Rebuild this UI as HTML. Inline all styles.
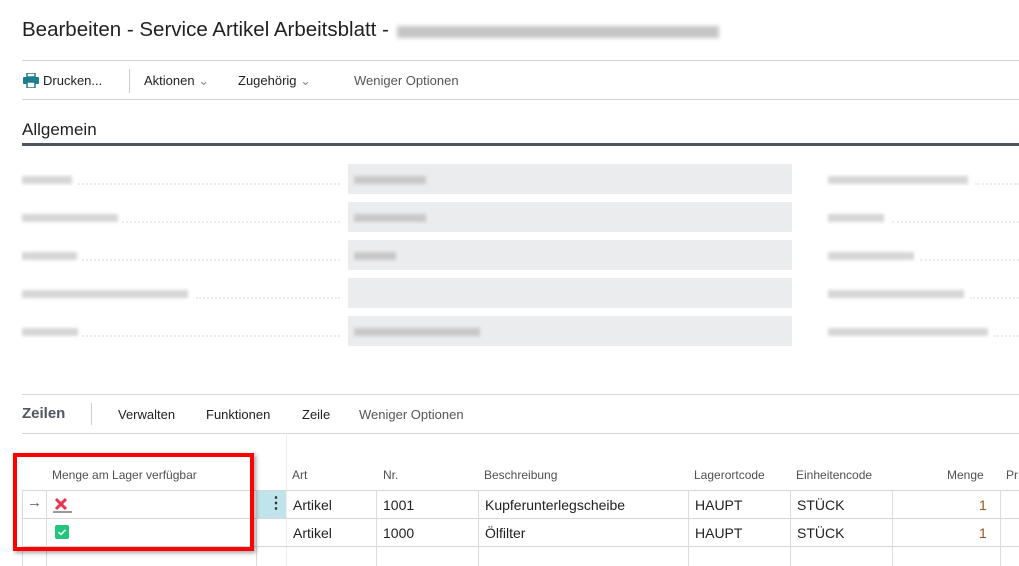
<!DOCTYPE html>
<html><head><meta charset="utf-8"><style>
body{margin:0;width:1019px;height:566px;overflow:hidden;background:#fff;font-family:"Liberation Sans",sans-serif;color:#212121;position:relative}
.a{position:absolute;white-space:nowrap}
.hl{position:absolute;height:1px;background:#d6d6d6}
.vl{position:absolute;width:1px;background:#dcdcdc}
.box{position:absolute;left:348px;width:444px;height:30px;background:#ebecee}
.lab{position:absolute;height:8px;background:#d6d6d6;filter:blur(1.5px)}
.dots{position:absolute;border-top:2px dotted #ececec;height:0}
.t13{font-size:13px}
.h{font-size:12px;color:#505050}
.c{font-size:14px;color:#212121}
</style></head><body>
<div class="a" style="left:22px;top:18px;font-size:20.5px;color:#212121">Bearbeiten - Service Artikel Arbeitsblatt -</div>
<div class="a" style="left:397px;top:26px;width:322px;height:12px;background:#c5c5c5;filter:blur(2px)"></div>
<div class="hl" style="left:22px;top:60px;width:997px"></div>
<svg class="a" style="left:23px;top:73px" width="16" height="15" viewBox="0 0 16 15"><rect x="4" y="0" width="8" height="4" fill="none" stroke="#1d7d90" stroke-width="1.5"/><rect x="0" y="4" width="16" height="7" rx="1" fill="#1d7d90"/><rect x="4" y="9" width="8" height="6" fill="#fff" stroke="#1d7d90" stroke-width="1.5"/></svg>
<div class="a t13" style="left:43px;top:73px">Drucken...</div>
<div class="vl" style="left:129px;top:69px;height:24px;background:#ccc"></div>
<div class="a t13" style="left:144px;top:73px">Aktionen <span style="color:#888">&#8964;</span></div>
<div class="a t13" style="left:238px;top:73px">Zugehörig <span style="color:#888">&#8964;</span></div>
<div class="a t13" style="left:354px;top:73px;color:#555">Weniger Optionen</div>
<div class="hl" style="left:22px;top:99px;width:997px"></div>
<div class="a" style="left:22px;top:120px;font-size:17px">Allgemein</div>
<div class="a" style="left:22px;top:143px;width:997px;height:3px;background:#4f5560"></div>

<div class="box" style="top:164px"></div><div class="box" style="top:202px"></div><div class="box" style="top:240px"></div><div class="box" style="top:278px"></div><div class="box" style="top:316px"></div>
<div class="lab" style="left:22px;top:176px;width:50px"></div><div class="dots" style="left:78px;top:183px;width:262px"></div>
<div class="lab" style="left:22px;top:214px;width:96px"></div><div class="dots" style="left:122px;top:221px;width:218px"></div>
<div class="lab" style="left:22px;top:252px;width:55px"></div><div class="dots" style="left:82px;top:259px;width:258px"></div>
<div class="lab" style="left:22px;top:290px;width:166px"></div><div class="dots" style="left:196px;top:297px;width:144px"></div>
<div class="lab" style="left:22px;top:328px;width:56px"></div><div class="dots" style="left:82px;top:335px;width:258px"></div>
<div class="lab" style="left:354px;top:176px;width:72px;background:#c8c8c8"></div>
<div class="lab" style="left:354px;top:214px;width:72px;background:#c8c8c8"></div>
<div class="lab" style="left:354px;top:252px;width:42px;background:#c8c8c8"></div>
<div class="lab" style="left:354px;top:328px;width:126px;background:#c8c8c8"></div>
<div class="lab" style="left:828px;top:176px;width:140px"></div><div class="dots" style="left:975px;top:183px;width:44px"></div>
<div class="lab" style="left:828px;top:214px;width:56px"></div><div class="dots" style="left:892px;top:221px;width:127px"></div>
<div class="lab" style="left:828px;top:252px;width:86px"></div><div class="dots" style="left:920px;top:259px;width:99px"></div>
<div class="lab" style="left:828px;top:290px;width:136px"></div><div class="dots" style="left:970px;top:297px;width:49px"></div>
<div class="lab" style="left:828px;top:328px;width:160px"></div><div class="dots" style="left:994px;top:335px;width:25px"></div>

<div class="hl" style="left:22px;top:394px;width:997px"></div>
<div class="a" style="left:22px;top:405px;font-size:15px;font-weight:bold;color:#505560">Zeilen</div>
<div class="vl" style="left:91px;top:403px;height:22px;background:#ccc"></div>
<div class="a t13" style="left:118px;top:407px">Verwalten</div>
<div class="a t13" style="left:206px;top:407px">Funktionen</div>
<div class="a t13" style="left:302px;top:407px">Zeile</div>
<div class="a t13" style="left:359px;top:407px;color:#555">Weniger Optionen</div>
<div class="hl" style="left:22px;top:433px;width:997px"></div>

<div class="vl" style="left:286px;top:433px;height:133px;background:#eee"></div>
<div class="hl" style="left:22px;top:490px;width:997px"></div>
<div class="hl" style="left:22px;top:518px;width:997px"></div>
<div class="hl" style="left:22px;top:546px;width:997px"></div>
<div class="vl" style="left:22px;top:490px;height:76px"></div>
<div class="vl" style="left:46px;top:490px;height:76px"></div>
<div class="vl" style="left:256px;top:490px;height:76px"></div>
<div class="vl" style="left:376px;top:490px;height:76px"></div>
<div class="vl" style="left:478px;top:490px;height:76px"></div>
<div class="vl" style="left:688px;top:490px;height:76px"></div>
<div class="vl" style="left:790px;top:490px;height:76px"></div>
<div class="vl" style="left:892px;top:490px;height:76px"></div>
<div class="vl" style="left:1000px;top:490px;height:76px"></div>
<div class="a" style="left:257px;top:491px;width:29px;height:27px;background:#c0e4ec"></div>
<div class="a" style="left:268px;top:493px;font-size:16px;color:#333;font-weight:bold">&#8942;</div>

<div class="a h" style="left:52px;top:468px">Menge am Lager verfügbar</div>
<div class="a h" style="left:292px;top:468px">Art</div>
<div class="a h" style="left:383px;top:468px">Nr.</div>
<div class="a h" style="left:484px;top:468px">Beschreibung</div>
<div class="a h" style="left:694px;top:468px">Lagerortcode</div>
<div class="a h" style="left:796px;top:468px">Einheitencode</div>
<div class="a h" style="left:947px;top:468px">Menge</div>
<div class="a h" style="left:1006px;top:468px">Pr</div>

<div class="a" style="left:27px;top:494px;font-size:15px;color:#505a70">&#8594;</div>
<svg class="a" style="left:53px;top:497px" width="20" height="16" viewBox="0 0 20 16"><path d="M3 2L13 12M13 2L3 12" stroke="#e8334e" stroke-width="3"/><line x1="0" y1="15" x2="19" y2="15" stroke="#333" stroke-width="1"/></svg>
<svg class="a" style="left:55px;top:525px" width="14" height="14" viewBox="0 0 14 14"><rect width="14" height="14" rx="2" fill="#1ec77a"/><path d="M3.5 7.2L6 9.5L10.5 4.8" stroke="#fff" stroke-width="1.5" fill="none"/></svg>

<div class="a c" style="left:293px;top:497px">Artikel</div>
<div class="a c" style="left:383px;top:497px">1001</div>
<div class="a c" style="left:485px;top:497px">Kupferunterlegscheibe</div>
<div class="a c" style="left:695px;top:497px">HAUPT</div>
<div class="a c" style="left:797px;top:497px">STÜCK</div>
<div class="a c" style="left:979px;top:497px;color:#a0520e">1</div>
<div class="a c" style="left:293px;top:525px">Artikel</div>
<div class="a c" style="left:383px;top:525px">1000</div>
<div class="a c" style="left:485px;top:525px">Ölfilter</div>
<div class="a c" style="left:695px;top:525px">HAUPT</div>
<div class="a c" style="left:797px;top:525px">STÜCK</div>
<div class="a c" style="left:979px;top:525px;color:#a0520e">1</div>

<div class="a" style="left:13px;top:453px;width:233px;height:90px;border:4px solid #f00;box-shadow:2px 2px 4px rgba(0,0,0,.35)"></div>
</body></html>
